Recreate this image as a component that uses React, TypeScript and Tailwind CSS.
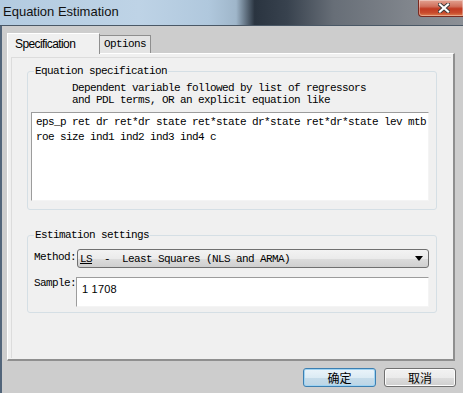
import React from 'react'

const mono = "font-['Liberation_Mono',monospace] text-[11px] tracking-[-0.6px] text-black"

function CloseButton() {
    return (
        <div className="ml-auto self-start w-[45px] h-[17px] rounded-bl-[4px] border border-t-0 border-r-0 border-[#7a2a20] bg-[linear-gradient(180deg,#e3a292_0%,#d0705c_40%,#c13a22_55%,#c84a2c_80%,#e08050_100%)] flex items-center pl-[19px] shadow-[inset_0_0_0_1px_rgba(255,255,255,0.35)]">
            <svg width="12" height="10" viewBox="0 0 12 10">
                <path d="M2 1.5 L10 8.5 M10 1.5 L2 8.5" stroke="#3a3a3a" strokeWidth="4" strokeLinecap="square" />
                <path d="M2 1.5 L10 8.5 M10 1.5 L2 8.5" stroke="#ffffff" strokeWidth="2.2" strokeLinecap="square" />
            </svg>
        </div>
    )
}

export default function App() {
    return (
        <div className="w-[463px] h-[393px] overflow-hidden bg-[#cdcdcd] flex flex-col">
            {/* TITLE BAR */}
            <div className="h-[26px] shrink-0 flex items-start border-b border-[#4a5866] bg-[linear-gradient(90deg,#b3cbe0_0%,#bed3e6_30%,#b0c8dd_45%,#9fb6ca_51%,#2a3440_55%,#38424e_62%,#676e77_72%,#80858c_88%,#8c9096_100%)]">
                <span className="pl-[3px] pt-[4px] font-['Liberation_Sans',sans-serif] text-[13px] leading-[16px] text-[#111]">
                    Equation Estimation
                </span>
                <CloseButton />
            </div>

            <div className="flex-1 flex">
                <div className="w-[2px] bg-[#52657a]" />
                <div className="flex-1 pl-[5px] pt-[7px] flex flex-col">
                    {/* TABS */}
                    <div className="h-[20px] flex items-end">
                        <div className="relative z-10 -mb-px h-[21px] w-[93px] bg-[#f0f0f0] border-t border-l border-white border-r border-r-[#8f8f8f] pl-[7px] pt-[2px] font-['Liberation_Sans',sans-serif] text-[12px] tracking-[-0.6px] leading-[16px] text-black">
                            Specification
                        </div>
                        <div className={`h-[18px] w-[51px] bg-[#e4e4e4] border border-b-0 border-[#8f8f8f] border-l-0 pl-[4px] pt-[1px] leading-[15px] ${mono}`}>
                            Options
                        </div>
                    </div>

                    {/* PANEL */}
                    <div className="h-[308px] w-[448px] bg-[#f0f0f0] border-t border-l border-white border-r-2 border-b-2 border-r-[#8f8f8f] border-b-[#8f8f8f] pt-[3px] pl-[3px] pr-[2px] pb-[1px] flex flex-col">
                        <div className="flex-1 border-t border-l border-[#dcdcdc] pl-[15px] flex flex-col">
                            <fieldset className="mt-[7px] w-[410px] border border-[#d5dfe5] rounded-[3px] pl-[3px] pb-[8px]">
                                <legend className={`ml-[3px] px-[1px] leading-[12px] ${mono}`}>Equation specification</legend>
                                <div className={`pt-[5px] pl-[41px] leading-[12px] whitespace-pre ${mono}`}>
                                    Dependent variable followed by list of regressors{'\n'}and PDL terms, OR an explicit equation like
                                </div>
                                <div className={`mt-[6px] w-[398px] h-[89px] bg-white border-t border-l border-[#9c9c9c] border-r border-b border-r-[#f4f4f4] border-b-[#f4f4f4] pl-[4px] pt-[2px] leading-[15px] whitespace-pre ${mono}`}>
                                    eps_p ret dr ret*dr state ret*state dr*state ret*dr*state lev mtb{'\n'}roe size ind1 ind2 ind3 ind4 c
                                </div>
                            </fieldset>

                            <fieldset className="mt-[19px] w-[410px] border border-[#d5dfe5] rounded-[3px] pl-[6px] pb-[5px]">
                                <legend className={`ml-[0px] px-[1px] leading-[12px] ${mono}`}>Estimation settings</legend>
                                <div className="mt-[8px] flex items-center">
                                    <span className={`w-[43px] leading-[12px] -mt-[3px] ${mono}`}>Method:</span>
                                    <div className={`w-[352px] h-[19px] rounded-[3px] border border-[#707070] bg-[linear-gradient(180deg,#f3f3f3_0%,#ebebeb_50%,#dddddd_51%,#cfcfcf_100%)] flex items-center pl-[2px] pr-[5px] leading-[14px] whitespace-pre ${mono}`}>
                                        <span className="underline">LS</span>
                                        <span>{'  -  Least Squares (NLS and ARMA)'}</span>
                                        <svg className="ml-auto" width="8" height="5" viewBox="0 0 8 5">
                                            <path d="M0 0 H8 L4 5 Z" fill="#000" />
                                        </svg>
                                    </div>
                                </div>
                                <div className="mt-[9px] flex items-start">
                                    <span className={`w-[42px] leading-[12px] ${mono}`}>Sample:</span>
                                    <div className="w-[353px] h-[30px] bg-white border-t border-l border-[#9c9c9c] border-r border-b border-r-[#f4f4f4] border-b-[#f4f4f4] pl-[5px] pt-[4px] font-['Liberation_Sans',sans-serif] text-[11px] tracking-[0.2px] leading-[14px] text-black">
                                        1 1708
                                    </div>
                                </div>
                            </fieldset>
                        </div>
                    </div>

                    {/* BUTTONS */}
                    <div className="mt-[7px] w-[449px] flex justify-end gap-[8px]">
                        <button className="w-[73px] h-[19px] rounded-[3px] border border-[#3c7fb1] bg-[linear-gradient(180deg,#eaf4fa_0%,#dcebf4_50%,#c6dcea_51%,#bcd5e6_100%)] shadow-[inset_0_0_0_1px_#9fd3f2] font-['Noto_Sans_CJK_SC',sans-serif] text-[12px] leading-[16px] text-black">
                            确定
                        </button>
                        <button className="w-[72px] h-[19px] rounded-[3px] border border-[#707070] bg-[linear-gradient(180deg,#f2f2f2_0%,#ebebeb_50%,#dddddd_51%,#cfcfcf_100%)] shadow-[inset_0_0_0_1px_#fcfcfc] font-['Noto_Sans_CJK_SC',sans-serif] text-[12px] leading-[16px] text-black">
                            取消
                        </button>
                    </div>
                </div>
            </div>
        </div>
    )
}
